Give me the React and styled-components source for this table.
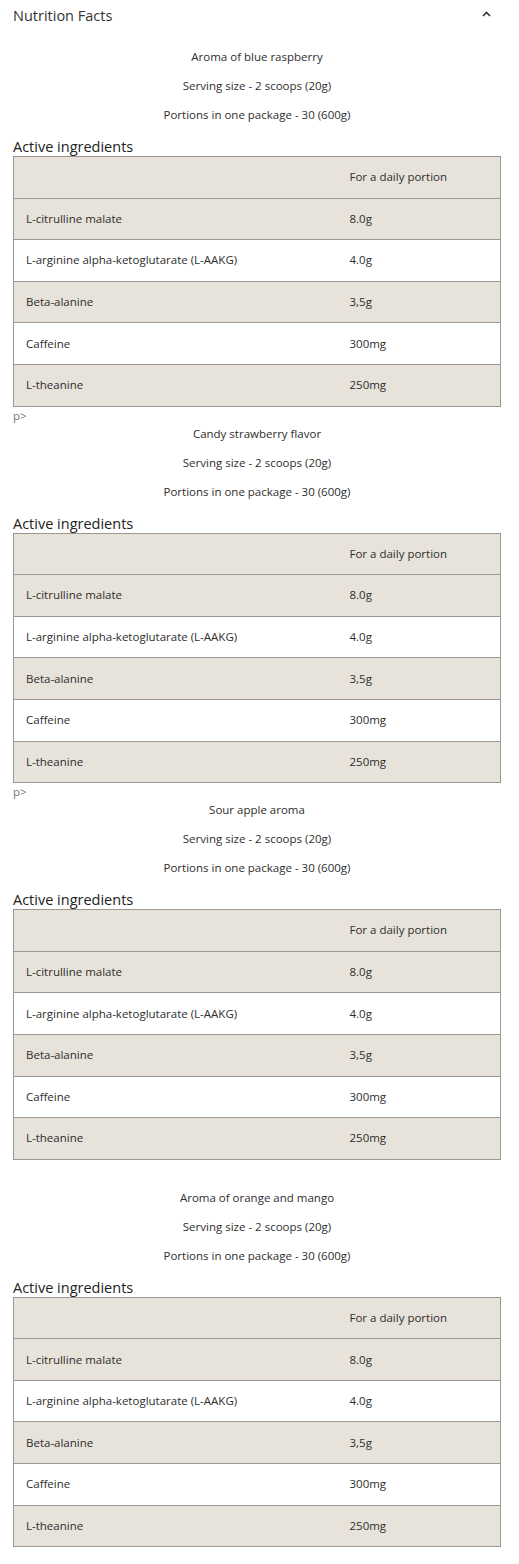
import React from "react";
import styled, { createGlobalStyle } from "styled-components";

const Global = createGlobalStyle`
  html, body { margin: 0; padding: 0; background: #fff; }
  body { font-family: "Open Sans", "Noto Sans", Arial, sans-serif; color: #333; }
  * { box-sizing: border-box; }
`;

const Page = styled.div`
  width: 519px;
  padding: 0 18px 0 13px;
`;

const Header = styled.div`
  height: 30px;
  display: flex;
  align-items: center;
  justify-content: space-between;
  padding-right: 10px;
`;

const Title = styled.h2`
  margin: 0;
  font-size: 14.5px;
  font-weight: 400;
  color: #333;
`;

const Chevron = styled.svg`
  width: 9px;
  height: 6px;
  margin-top: -2px;
`;

const Body = styled.div`
  padding-top: 18px;
`;

const Leading = styled.div`
  height: ${(p) => p.$h}px;
  font-size: 11.5px;
  line-height: 18px;
  color: #777;
`;

const Line = styled.p`
  margin: 0 0 ${(p) => (p.$last ? 0 : 12)}px;
  font-size: 11.5px;
  line-height: 17px;
  text-align: center;
  color: #2e2e2e;
`;

const Heading = styled.h3`
  margin: 13px 0 0;
  padding-top: 1px;
  font-size: 14.5px;
  line-height: 19px;
  font-weight: 400;
  color: #222;
`;

const Table = styled.table`
  width: 100%;
  border-collapse: collapse;
  border: 1px solid #9b9792;
`;

const Row = styled.tr`
  background: ${(p) => (p.$shaded ? "#e7e2da" : "#fff")};
`;

const Cell = styled.td`
  border-top: 1px solid #9b9792;
  padding: 12px 12px;
  height: 41.6px;
  font-size: 11.5px;
  line-height: 16px;
  color: #2e2e2e;
  width: ${(p) => (p.$first ? "324px" : "auto")};
`;

const ingredients = [
  ["L-citrulline malate", "8.0g"],
  ["L-arginine alpha-ketoglutarate (L-AAKG)", "4.0g"],
  ["Beta-alanine", "3,5g"],
  ["Caffeine", "300mg"],
  ["L-theanine", "250mg"],
];

const blocks = [
  { flavor: "Aroma of blue raspberry", lead: null, leadH: 0 },
  { flavor: "Candy strawberry flavor", lead: "p>", leadH: 18 },
  { flavor: "Sour apple aroma", lead: "p>", leadH: 18 },
  { flavor: "Aroma of orange and mango", lead: "", leadH: 29 },
];

function Block({ flavor, lead, leadH }) {
  return (
    <section>
      {leadH > 0 && <Leading $h={leadH}>{lead}</Leading>}
      <Line>{flavor}</Line>
      <Line>Serving size - 2 scoops (20g)</Line>
      <Line $last>Portions in one package - 30 (600g)</Line>
      <Heading>Active ingredients</Heading>
      <Table>
        <tbody>
          <Row $shaded>
            <Cell $first></Cell>
            <Cell>For a daily portion</Cell>
          </Row>
          {ingredients.map(([n, v], i) => (
            <Row key={n} $shaded={i % 2 === 0}>
              <Cell $first>{n}</Cell>
              <Cell>{v}</Cell>
            </Row>
          ))}
        </tbody>
      </Table>
    </section>
  );
}

export default function App() {
  return (
    <>
      <Global />
      <Page>
        <Header>
          <Title>Nutrition Facts</Title>
          <Chevron viewBox="0 0 9 6">
            <polyline points="1,5 4.5,1.5 8,5" fill="none" stroke="#333" strokeWidth="1.6" />
          </Chevron>
        </Header>
        <Body>
          {blocks.map((b) => (
            <Block key={b.flavor} {...b} />
          ))}
        </Body>
      </Page>
    </>
  );
}
